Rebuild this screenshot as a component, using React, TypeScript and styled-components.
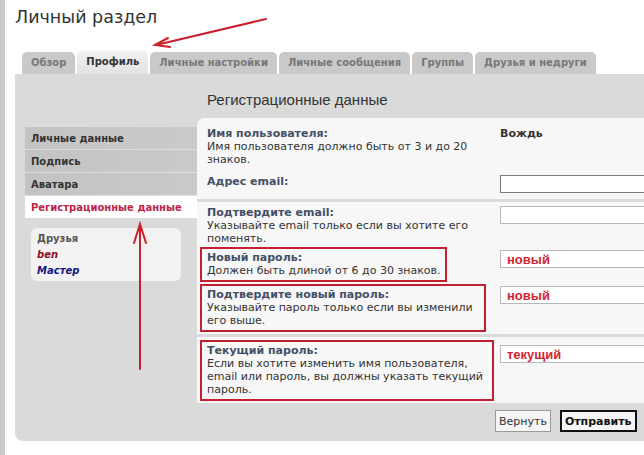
import React from 'react';
import styled, { createGlobalStyle } from 'styled-components';

const GlobalStyle = createGlobalStyle`
  html, body {
    margin: 0;
    padding: 0;
    background: #fff;
    overflow: hidden;
  }
  body {
    font-family: 'DejaVu Sans', Verdana, sans-serif;
    font-size: 11px;
    color: #333;
  }
`;

const Screen = styled.div`
  position: relative;
  width: 100%;
  height: 455px;
  overflow: hidden;
`;

const Page = styled.div`
  height: 100%;
  box-sizing: border-box;
  border-left: 5px solid #c9c9c9;
  padding: 5px 0 0 10px;
`;

const Title = styled.h1`
  margin: 0;
  font-size: 17.5px;
  line-height: 24px;
  font-weight: normal;
  color: #333;
`;

const Tabs = styled.ul`
  display: flex;
  align-items: flex-end;
  gap: 2px;
  margin: 21px 0 0 7px;
  padding: 0;
  list-style: none;
`;

const Tab = styled.li<{ $active?: boolean }>`
  height: ${({ $active }) => ($active ? 24 : 22)}px;
  line-height: ${({ $active }) => ($active ? 24 : 22)}px;
  padding: 0 9px;
  border-radius: 5px 5px 0 0;
  font-size: 10px;
  font-weight: bold;
  white-space: nowrap;
  color: ${({ $active }) => ($active ? '#333' : '#777')};
  background: ${({ $active }) =>
    $active ? 'linear-gradient(#f2f2f2, #e2e2e3)' : '#c9c9ca'};
  box-shadow: ${({ $active }) => ($active ? 'inset 0 1px 0 #fafafa' : 'none')};
`;

const Panel = styled.div`
  width: 720px;
  background: #dadadb;
  border-radius: 0 0 0 8px;
  padding: 0 0 9px 10px;
`;

const Heading = styled.h2`
  margin: 0 0 9px 182px;
  padding-top: 17px;
  font-family: 'Liberation Sans', Arial, sans-serif;
  font-size: 15px;
  line-height: 18px;
  font-weight: normal;
  color: #333;
`;

const Body = styled.div`
  display: grid;
  grid-template-columns: 172px 470px;
  align-items: start;
`;

const Side = styled.div`
  margin-top: 9px;
`;

const Menu = styled.ul`
  margin: 0;
  padding: 0;
  list-style: none;
`;

const MenuItem = styled.li<{ $active?: boolean }>`
  height: 22px;
  line-height: 23px;
  padding-left: 6px;
  border-bottom: 1px solid #dcdcdc;
  font-size: 10px;
  font-weight: bold;
  color: ${({ $active }) => ($active ? '#bb2449' : '#333')};
  background: ${({ $active }) =>
    $active ? '#fff' : 'linear-gradient(to right, #c3c3c4, #cacacb)'};
`;

const Friends = styled.div`
  margin: 9px 16px 0 6px;
  padding: 3px 6px 2px;
  background: #f2f2f2;
  border-radius: 6px;
  font-size: 10px;
  line-height: 16px;
`;

const FriendsTitle = styled.div`
  font-weight: bold;
  color: #555;
`;

const Friend = styled.div<{ $color: string }>`
  font-weight: bold;
  font-style: italic;
  color: ${({ $color }) => $color};
`;

const Form = styled.div`
  display: flex;
  flex-direction: column;
`;

const Fieldset = styled.div<{ $first?: boolean; $pad: string; $gap?: number }>`
  background: #f7f7f7;
  border-radius: ${({ $first }) => ($first ? '8px 0 0 0' : '0')};
  padding: ${({ $pad }) => $pad};
  margin-top: ${({ $gap }) => $gap ?? 0}px;
  display: flex;
  flex-direction: column;
`;

const Row = styled.div<{ $gap?: number }>`
  display: grid;
  grid-template-columns: 303px 1fr;
  align-items: start;
  margin-top: ${({ $gap }) => $gap ?? 0}px;
`;

const Term = styled.div<{ $marked?: boolean; $box?: number }>`
  line-height: 13px;
  justify-self: start;
  box-sizing: border-box;
  ${({ $marked, $box }) =>
    $marked
      ? `
    margin-left: 3px;
    border: 2px solid #c3202f;
    padding: 2px 4px 3px 5px;
    max-width: 300px;
    ${$box ? `width: ${$box}px;` : ''}
  `
      : `
    padding: 0 10px;
    width: 303px;
  `}
`;

const Label = styled.div`
  font-weight: bold;
  color: #425067;
`;

const Value = styled.div`
  font-weight: bold;
  line-height: 13px;
  color: #333;
`;

const Field = styled.input<{ $dark?: boolean; $shift?: number }>`
  display: block;
  width: 190px;
  height: 18px;
  margin: ${({ $shift }) => $shift ?? 0}px 0 0;
  box-sizing: border-box;
  padding: 0 6px;
  border: 1px solid ${({ $dark }) => ($dark ? '#7b7b7b' : '#b8b8b8')};
  background: #fff;
  font-family: 'Liberation Sans', Arial, sans-serif;
  font-size: 13px;
  font-weight: bold;
  color: #d42532;
  outline: none;
`;

const Buttons = styled.div`
  display: flex;
  gap: 9px;
  margin: 7px 0 0 298px;
`;

const Button = styled.button<{ $primary?: boolean }>`
  height: 22px;
  padding: 0 3px;
  box-sizing: border-box;
  font-family: 'DejaVu Sans', Verdana, sans-serif;
  font-size: 11px;
  font-weight: ${({ $primary }) => ($primary ? 'bold' : 'normal')};
  color: ${({ $primary }) => ($primary ? '#111' : '#333')};
  background: #f5f5f5;
  border: ${({ $primary }) => ($primary ? '2px solid #111' : '1px solid #9a9a9a')};
`;

const Overlay = styled.svg`
  position: absolute;
  left: 0;
  top: 0;
  pointer-events: none;
`;

const tabs = [
  'Обзор',
  'Профиль',
  'Личные настройки',
  'Личные сообщения',
  'Группы',
  'Друзья и недруги',
];

const menu = ['Личные данные', 'Подпись', 'Аватара', 'Регистрационные данные'];

export default function App() {
  return (
    <Screen>
      <GlobalStyle />
      <Page>
        <Title>Личный раздел</Title>
        <Tabs>
          {tabs.map((t) => (
            <Tab key={t} $active={t === 'Профиль'}>
              {t}
            </Tab>
          ))}
        </Tabs>
        <Panel>
          <Heading>Регистрационные данные</Heading>
          <Body>
            <Side>
              <Menu>
                {menu.map((m) => (
                  <MenuItem key={m} $active={m === 'Регистрационные данные'}>
                    {m}
                  </MenuItem>
                ))}
              </Menu>
              <Friends>
                <FriendsTitle>Друзья</FriendsTitle>
                <Friend $color="#8a0f1c">ben</Friend>
                <Friend $color="#101880">Мастер</Friend>
              </Friends>
            </Side>
            <Form>
              <Fieldset $first $pad="9px 0 6px">
                <Row>
                  <Term>
                    <Label>Имя пользователя:</Label>
                    Имя пользователя должно быть от 3 и до 20 знаков.
                  </Term>
                  <Value>Вождь</Value>
                </Row>
                <Row $gap={9}>
                  <Term>
                    <Label>Адрес email:</Label>
                  </Term>
                  <Field $dark readOnly value="" />
                </Row>
              </Fieldset>
              <Fieldset $pad="4px 0 2px" $gap={3}>
                <Row>
                  <Term>
                    <Label>Подтвердите email:</Label>
                    Указывайте email только если вы хотите его поменять.
                  </Term>
                  <Field readOnly value="" />
                </Row>
                <Row $gap={2}>
                  <Term $marked>
                    <Label>Новый пароль:</Label>
                    Должен быть длиной от 6 до 30 знаков.
                  </Term>
                  <Field readOnly value="новый" $shift={3} />
                </Row>
                <Row $gap={2}>
                  <Term $marked $box={286}>
                    <Label>Подтвердите новый пароль:</Label>
                    Указывайте пароль только если вы изменили его выше.
                  </Term>
                  <Field readOnly value="новый" $shift={2} />
                </Row>
              </Fieldset>
              <Fieldset $pad="3px 0 2px" $gap={3}>
                <Row>
                  <Term $marked $box={294}>
                    <Label>Текущий пароль:</Label>
                    Если вы хотите изменить имя пользователя, email или пароль,
                    вы должны указать текущий пароль.
                  </Term>
                  <Field readOnly value="текущий" $shift={5} />
                </Row>
              </Fieldset>
              <Buttons>
                <Button>Вернуть</Button>
                <Button $primary>Отправить</Button>
              </Buttons>
            </Form>
          </Body>
        </Panel>
      </Page>
      <Overlay width="644" height="455" viewBox="0 0 644 455">
        <g stroke="#c8202e" strokeWidth="2" fill="none" strokeLinecap="round">
          <path d="M266 19 Q210 32 156 45" />
          <path d="M168 38 L155 45 L170 47" />
          <path d="M140 369 L140 226" />
          <path d="M134 243 L140 224 L146 243" />
        </g>
      </Overlay>
    </Screen>
  );
}
